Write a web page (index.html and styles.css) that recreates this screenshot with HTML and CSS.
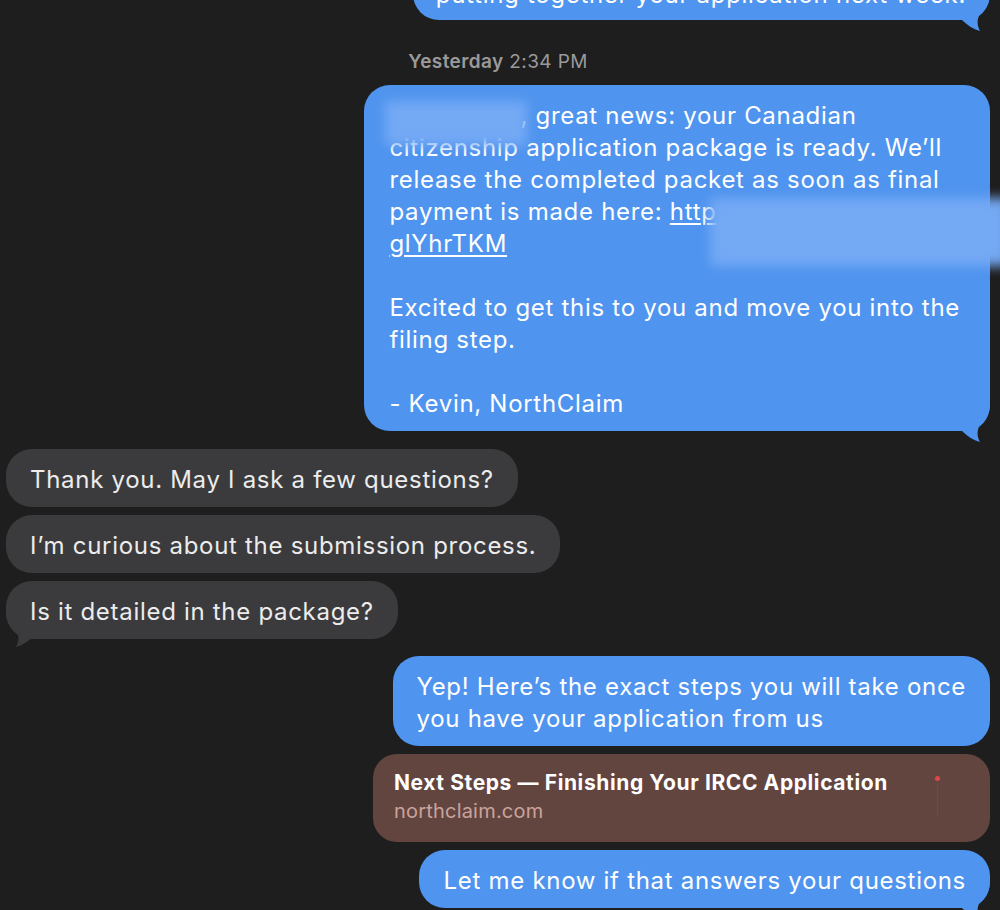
FILE: index.html
```html
<!DOCTYPE html>
<html>
<head>
    <title>Messages</title>
    <link rel="stylesheet" href="styles.css">
</head>
<body>
    <div class="thread">
        <div class="msg sent cut">
            putting together your application next week.
            <svg class="tail tail-r" viewBox="0 0 30 42"><path d="M0 0H30V5C29 17 25 22 19 27C17 31 17 37 20 42C13 40 7 36 2 31L0 31Z"/></svg>
        </div>

        <div class="stamp"><b>Yesterday</b> 2:34 PM</div>

        <div class="msg sent big">
            <span class="hide"></span>, great news: your Canadian<br>
            citizenship application package is ready. We’ll<br>
            release the completed packet as soon as final<br>
            payment is made here: <u>http</u><br>
            <u>glYhrTKM</u><br>
            <br>
            Excited to get this to you and move you into the<br>
            filing step.<br>
            <br>
            - Kevin, NorthClaim
            <span class="blur blur-name"></span>
            <span class="blur blur-link"></span>
            <svg class="tail tail-r" viewBox="0 0 30 42"><path d="M0 0H30V5C29 17 25 22 19 27C17 31 17 37 20 42C13 40 7 36 2 31L0 31Z"/></svg>
        </div>

        <div class="msg recv">Thank you. May I ask a few questions?</div>
        <div class="msg recv">I’m curious about the submission process.</div>
        <div class="msg recv">
            Is it detailed in the package?
            <svg class="tail tail-l" viewBox="0 0 30 42"><path d="M0 0H30V5C29 17 25 22 19 27C17 31 17 37 20 42C13 40 7 36 2 31L0 31Z"/></svg>
        </div>

        <div class="msg sent yep">Yep! Here’s the exact steps you will take once<br>you have your application from us</div>

        <div class="link-card">
            <div class="link-text">
                <div class="link-title">Next Steps — Finishing Your IRCC Application</div>
                <div class="link-domain">northclaim.com</div>
            </div>
            <div class="link-mark"><span class="dot"></span><span class="stem"></span></div>
        </div>

        <div class="msg sent last">
            Let me know if that answers your questions
            <svg class="tail tail-r" viewBox="0 0 30 42"><path d="M0 0H30V5C29 17 25 22 19 27C17 31 17 37 20 42C13 40 7 36 2 31L0 31Z"/></svg>
        </div>
    </div>
</body>
</html>
```

FILE: styles.css
```css
body {
    margin: 0;
    background-color: #1e1e1e;
    font-family: Inter, "Helvetica Neue", Arial, sans-serif;
    overflow: hidden;
    height: 910px;
}
.thread {
    display: flex;
    flex-direction: column;
    padding: 0 10px 0 6px;
}
.msg {
    position: relative;
    font-size: 24px;
    line-height: 32px;
    letter-spacing: 0.7px;
    color: #fff;
    padding: 15px 24px 11px 24px;
    border-radius: 26px;
    margin-bottom: 8px;
}
.sent {
    align-self: flex-end;
    background-color: #4f94ef;
}
.recv {
    align-self: flex-start;
    background-color: #3b3b3d;
    color: #ececec;
}
.cut {
    margin-top: -38px;
    padding: 17px 24px 9px 23px;
}
.stamp {
    align-self: center;
    color: #9a9a9a;
    font-size: 19px;
    line-height: 24px;
    letter-spacing: 0.4px;
    margin: 22px 0 11px 0;
}
.stamp b {
    font-weight: 600;
}
.big {
    padding: 15px 30px 11px 25px;
    margin-bottom: 18px;
}
.big u {
    text-decoration-thickness: 1.5px;
    text-underline-offset: 3px;
}
.hide {
    display: inline-block;
    width: 131px;
}
.blur {
    position: absolute;
    background-color: #74a9f4;
    filter: blur(6px);
}
.blur-name {
    left: 21px;
    top: 16px;
    width: 142px;
    height: 44px;
}
.blur-link {
    left: 346px;
    top: 113px;
    width: 300px;
    height: 68px;
}
.yep {
    margin-top: 9px;
    padding: 15px 24px 11px 24px;
}
.tail {
    position: absolute;
    z-index: -1;
    width: 30px;
    height: 42px;
    bottom: -11px;
}
.tail-r {
    right: 0;
    fill: #4f94ef;
}
.tail-l {
    left: 0;
    bottom: -8px;
    fill: #3b3b3d;
    transform: scaleX(-1);
}
.link-card {
    align-self: flex-end;
    width: 617px;
    box-sizing: border-box;
    display: flex;
    align-items: flex-start;
    background-color: #634540;
    border-radius: 24px;
    padding: 14px 50px 16px 21px;
    margin-bottom: 8px;
}
.link-text {
    flex: 1;
}
.link-title {
    color: #fff;
    font-size: 21px;
    font-weight: 700;
    line-height: 29px;
    letter-spacing: 0.6px;
}
.link-domain {
    color: #c9a39c;
    font-size: 20px;
    line-height: 29px;
    letter-spacing: 0.2px;
}
.link-mark {
    display: flex;
    flex-direction: column;
    align-items: center;
    padding-top: 8px;
}
.dot {
    width: 5px;
    height: 5px;
    border-radius: 50%;
    background-color: #e0474a;
}
.stem {
    width: 1px;
    height: 34px;
    margin-top: 2px;
    background-color: #5d4e57;
}
.last {
    padding-left: 25px;
}
```
